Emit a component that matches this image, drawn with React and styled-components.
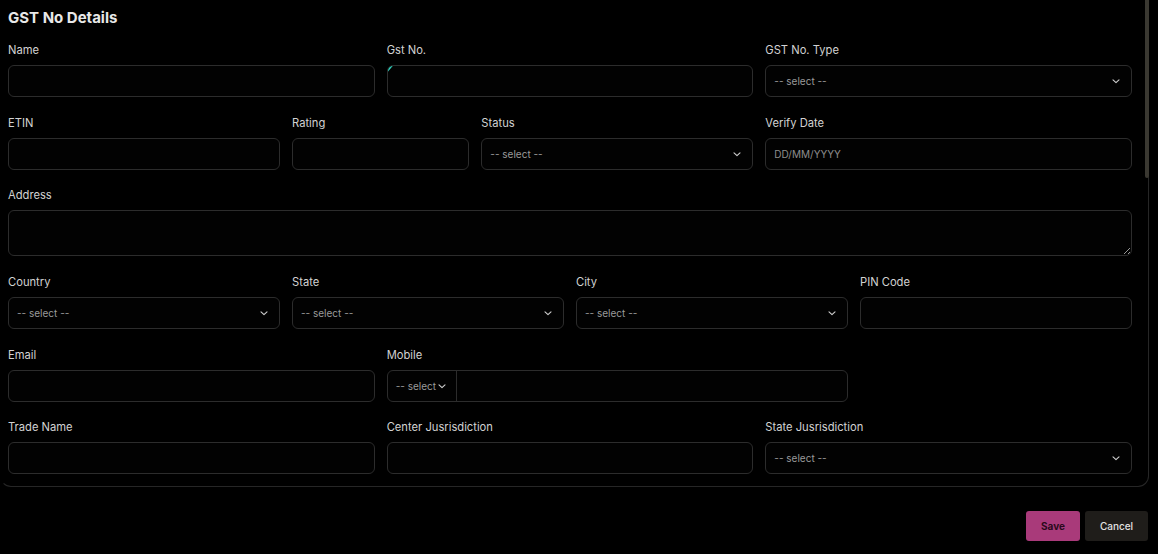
import React from "react";
import styled, { createGlobalStyle } from "styled-components";

const Global = createGlobalStyle`
  html, body { margin: 0; padding: 0; background: #000; }
  body { font-family: Inter, "Noto Sans", sans-serif; color: #d4d4d4; }
  * { box-sizing: border-box; }
`;

const Page = styled.div`
  width: 1158px;
  height: 554px;
  background: #000;
  overflow: hidden;
  display: flex;
  flex-direction: column;
`;

const Panel = styled.section`
  position: relative;
  width: 1149px;
  border: 1px solid #262626;
  border-top: none;
  border-left-color: transparent;
  border-radius: 0 0 11px 11px;
  padding: 8px 16px 12px 7px;
`;

const ScrollThumb = styled.div`
  position: absolute;
  right: -1px;
  top: 0;
  width: 4px;
  height: 178px;
  background: #3a3831;
  border-radius: 0 0 2px 2px;
`;

const Title = styled.h2`
  margin: 0 0 14px;
  font-size: 15px;
  line-height: 20px;
  font-weight: 700;
  color: #e8e8e8;
`;

const Grid = styled.div`
  display: grid;
  grid-template-columns: repeat(12, 1fr);
  column-gap: 12px;
  row-gap: 17.7px;
  width: 1124px;
`;

const Field = styled.div`
  grid-column: span ${(p) => p.$span};
  display: flex;
  flex-direction: column;
  min-width: 0;
`;

const Label = styled.label`
  font-size: 11.2px;
  line-height: 16px;
  margin-bottom: 7px;
  color: #d2d2d2;
`;

const Input = styled.input`
  height: 32px;
  width: 100%;
  background: #020202;
  border: 1px solid #2c2c2c;
  border-radius: 6px;
  padding: 0 8px;
  color: #ddd;
  font-family: inherit;
  font-size: 10px;
  outline: none;
  &::placeholder { color: #8e8e8e; }
`;

const InputWrap = styled.div`
  position: relative;
`;

const FocusCorner = styled.span`
  position: absolute;
  left: 1px;
  top: 1px;
  width: 5px;
  height: 6px;
  background: #2fd3bf;
  border-top-left-radius: 5px;
  clip-path: polygon(0 0, 100% 0, 0 100%);
`;

const TextArea = styled.textarea`
  height: 46px;
  width: 100%;
  background: #020202;
  border: 1px solid #2c2c2c;
  border-radius: 6px;
  padding: 6px 8px;
  color: #ddd;
  font-family: inherit;
  resize: vertical;
  outline: none;
  color-scheme: dark;
`;

const SelectBox = styled.div`
  height: 32px;
  display: flex;
  align-items: center;
  justify-content: space-between;
  border: 1px solid #2c2c2c;
  border-radius: 6px;
  background: #020202;
  padding: 0 10px 0 8px;
  font-size: 10px;
  color: #9a9a9a;
`;

const Chevron = () => (
  <svg width="10" height="10" viewBox="0 0 10 10" fill="none">
    <path d="M2 3.8 L5 6.6 L8 3.8" stroke="#cfcfcf" strokeWidth="1.1" strokeLinecap="round" strokeLinejoin="round" />
  </svg>
);

const PhoneBox = styled.div`
  height: 32px;
  display: flex;
  align-items: stretch;
  border: 1px solid #2c2c2c;
  border-radius: 6px;
  background: #020202;
`;

const CodeSelect = styled.div`
  width: 69px;
  flex: none;
  display: flex;
  align-items: center;
  gap: 1px;
  padding-left: 8px;
  font-size: 10px;
  color: #9a9a9a;
  border-right: 1px solid #2c2c2c;
`;

const Footer = styled.div`
  display: flex;
  justify-content: flex-end;
  gap: 5px;
  width: 1148px;
  margin-top: 23.5px;
`;

const Button = styled.button`
  height: 30px;
  border: none;
  border-radius: 3px;
  font-family: inherit;
  font-size: 10px;
  padding: 0;
  width: ${(p) => (p.$primary ? "54px" : "63px")};
  background: ${(p) => (p.$primary ? "#a93a7a" : "#1f1d1a")};
  color: ${(p) => (p.$primary ? "#2a0a1c" : "#e2e2e2")};
  font-weight: ${(p) => (p.$primary ? 700 : 500)};
`;

const Text = ({ label, span, placeholder, corner }) => (
  <Field $span={span}>
    <Label>{label}</Label>
    <InputWrap>
      <Input placeholder={placeholder} />
      {corner && <FocusCorner />}
    </InputWrap>
  </Field>
);

const Select = ({ label, span }) => (
  <Field $span={span}>
    <Label>{label}</Label>
    <SelectBox>
      <span>-- select --</span>
      <Chevron />
    </SelectBox>
  </Field>
);

export default function App() {
  return (
    <Page>
      <Global />
      <Panel>
        <ScrollThumb />
        <Title>GST No Details</Title>
        <Grid>
          <Text label="Name" span={4} />
          <Text label="Gst No." span={4} corner />
          <Select label="GST No. Type" span={4} />

          <Text label="ETIN" span={3} />
          <Text label="Rating" span={2} />
          <Select label="Status" span={3} />
          <Text label="Verify Date" span={4} placeholder="DD/MM/YYYY" />

          <Field $span={12}>
            <Label>Address</Label>
            <TextArea />
          </Field>

          <Select label="Country" span={3} />
          <Select label="State" span={3} />
          <Select label="City" span={3} />
          <Text label="PIN Code" span={3} />

          <Text label="Email" span={4} />
          <Field $span={5}>
            <Label>Mobile</Label>
            <PhoneBox>
              <CodeSelect>
                <span>-- select</span>
                <Chevron />
              </CodeSelect>
            </PhoneBox>
          </Field>
          <Field $span={3} />

          <Text label="Trade Name" span={4} />
          <Text label="Center Jusrisdiction" span={4} />
          <Select label="State Jusrisdiction" span={4} />
        </Grid>
      </Panel>
      <Footer>
        <Button $primary>Save</Button>
        <Button>Cancel</Button>
      </Footer>
    </Page>
  );
}
